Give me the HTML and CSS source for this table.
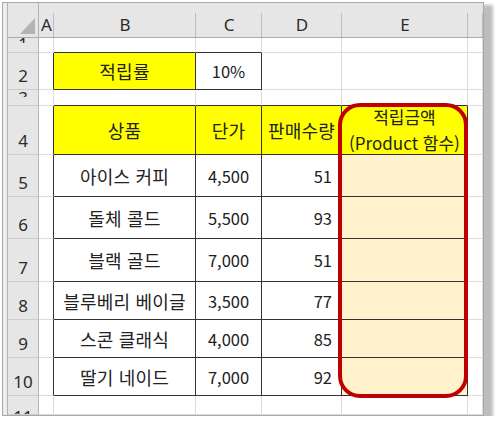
FILE: index.html
```html
<!DOCTYPE html>
<html lang="ko">
<head>
<meta charset="utf-8">
<title>적립금액</title>
<link rel="stylesheet" href="styles.css">
</head>
<body>
<div class="frame">
  <div class="sheet">
    <div class="corner"><svg width="31" height="35" viewBox="0 0 31 35"><polygon points="27,15 27,31 12,31" fill="#b4b4b4"/></svg></div>
    <div class="ch">A</div><div class="ch">B</div><div class="ch">C</div><div class="ch">D</div><div class="ch">E</div><div class="ch"></div>

    <div class="rh clip r1"><span>1</span></div>
    <div class="c"></div><div class="c db"></div><div class="c db"></div><div class="c"></div><div class="c"></div><div class="c"></div>

    <div class="rh"><span>2</span></div>
    <div class="c dr"></div><div class="c y dr db k">적립률</div><div class="c dr db">10%</div><div class="c"></div><div class="c"></div><div class="c"></div>

    <div class="rh clip r3"><span>3</span></div>
    <div class="c"></div><div class="c db"></div><div class="c db"></div><div class="c db"></div><div class="c db"></div><div class="c"></div>

    <div class="rh"><span>4</span></div>
    <div class="c dr"></div><div class="c y dr db k">상품</div><div class="c y dr db k">단가</div><div class="c y dr db k">판매수량</div><div class="c y dr db two">적립금액<br>(Product 함수)</div><div class="c"></div>

    <div class="rh"><span>5</span></div>
    <div class="c dr"></div><div class="c dr db k">아이스 커피</div><div class="c dr db">4,500</div><div class="c dr db right">51</div><div class="c p dr db"></div><div class="c"></div>

    <div class="rh"><span>6</span></div>
    <div class="c dr"></div><div class="c dr db k">돌체 콜드</div><div class="c dr db">5,500</div><div class="c dr db right">93</div><div class="c p dr db"></div><div class="c"></div>

    <div class="rh"><span>7</span></div>
    <div class="c dr"></div><div class="c dr db k">블랙 골드</div><div class="c dr db">7,000</div><div class="c dr db right">51</div><div class="c p dr db"></div><div class="c"></div>

    <div class="rh"><span>8</span></div>
    <div class="c dr"></div><div class="c dr db k">블루베리 베이글</div><div class="c dr db">3,500</div><div class="c dr db right">77</div><div class="c p dr db"></div><div class="c"></div>

    <div class="rh"><span>9</span></div>
    <div class="c dr"></div><div class="c dr db k">스콘 클래식</div><div class="c dr db">4,000</div><div class="c dr db right">85</div><div class="c p dr db"></div><div class="c"></div>

    <div class="rh"><span>10</span></div>
    <div class="c dr"></div><div class="c dr db k">딸기 네이드</div><div class="c dr db">7,000</div><div class="c dr db right">92</div><div class="c p dr db"></div><div class="c"></div>

    <div class="rh clip r11"><span>11</span></div>
    <div class="c"></div><div class="c"></div><div class="c"></div><div class="c"></div><div class="c"></div><div class="c"></div>

    <div class="highlight"></div>
  </div>
</div>
</body>
</html>
```

FILE: styles.css
```css
html, body {
  margin: 0;
  padding: 0;
  background: #ffffff;
}

.frame {
  width: fit-content;
  margin: 2px 0 0 2px;
  border: 1px solid #a8a8a8;
  padding-left: 4px;
  background: #ececec;
  box-shadow: 6px 6px 3px 3px #bdbdbd;
}

.sheet {
  position: relative;
  display: grid;
  grid-template-columns: 31px 15px 142px 66px 80px 126px 15px;
  grid-template-rows: 35px 15px 37px 16px 49px 42px 42px 43px 38px 38px 38px 19px;
  border-left: 1px solid #b2b2b2;
  background: #ffffff;
  overflow: hidden;
  font-family: "Noto Sans CJK KR", "Noto Sans", sans-serif;
  color: #222222;
}

.sheet > div {
  box-sizing: border-box;
}

.corner {
  background: #e6e6e6;
  border-right: 1px solid #b4b4b4;
  border-bottom: 1px solid #ababab;
}
.corner svg {
  display: block;
}

.ch {
  display: flex;
  align-items: flex-end;
  justify-content: center;
  padding-bottom: 2px;
  background:
    linear-gradient(#e6e6e6, #e6e6e6) left top / 100% 10px no-repeat,
    linear-gradient(to left, #bdbdbd 1px, #e6e6e6 1px);
  border-bottom: 1px solid #ababab;
  font-family: "Noto Sans", sans-serif;
  font-size: 17px;
  line-height: 20px;
  color: #2b2b2b;
}

.rh {
  display: flex;
  align-items: flex-end;
  justify-content: center;
  padding-bottom: 3px;
  background: #e6e6e6;
  border-right: 1px solid #b4b4b4;
  border-bottom: 1px solid #cdcdcd;
  font-family: "Noto Sans", sans-serif;
  font-size: 17px;
  line-height: 20px;
  color: #2b2b2b;
  overflow: hidden;
}

.rh.clip {
  align-items: flex-start;
  padding-bottom: 0;
}
.rh.clip span {
  display: block;
  height: 9px;
  overflow: hidden;
  line-height: 20px;
}
.rh.r1 span { margin-top: -4px; }
.rh.r3 span { margin-top: -2px; }
.rh.r11 span { margin-top: 11px; }

.c {
  display: flex;
  align-items: center;
  justify-content: center;
  text-align: center;
  border-right: 1px solid #dcdcdc;
  border-bottom: 1px solid #dcdcdc;
  font-size: 16.5px;
  line-height: 22px;
  white-space: nowrap;
}

.c.k {
  font-size: 18px;
  letter-spacing: 0.2px;
}

.c.dr { border-right-color: #333333; }
.c.db { border-bottom-color: #333333; }

.c.y { background: #ffff00; }
.c.p { background: #fff2cc; }

.c.right {
  justify-content: flex-end;
  padding-right: 9px;
}

.c.two {
  font-size: 17px;
  line-height: 26px;
}

.highlight {
  position: absolute;
  left: 330px;
  top: 100px;
  width: 130px;
  height: 295px;
  box-sizing: border-box;
  border: 4px solid #c00000;
  border-radius: 22px;
}
```
